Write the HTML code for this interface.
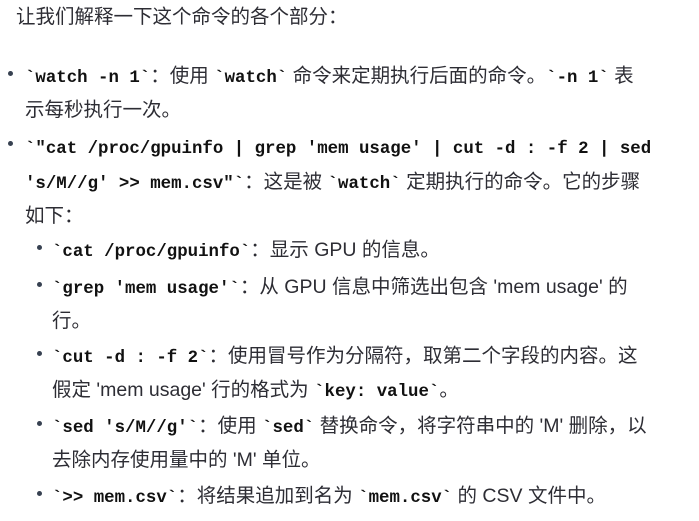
<!DOCTYPE html>
<html><head><meta charset="utf-8"><style>
body{margin:0;width:699px;height:521px;background:#fff;overflow:hidden;position:relative;font-family:"Liberation Sans","Noto Sans CJK SC",sans-serif;font-size:19.5px;color:#2d2d34}
.l{position:absolute;white-space:nowrap;line-height:24px}
code{font-family:"Liberation Mono",monospace;font-weight:bold;font-size:17.4px;color:#111}
.b{position:absolute;width:5px;height:5px;border-radius:50%;background:#374151}
</style></head><body>
<div class="l" style="left:16px;top:5px">让我们解释一下这个命令的各个部分：</div>

<div class="b" style="left:8px;top:71px"></div>
<div class="l" style="left:25px;top:64px"><code>`watch -n 1`</code>：使用 <code>`watch`</code> 命令来定期执行后面的命令。<code>`-n 1`</code> 表</div>
<div class="l" style="left:25px;top:98px">示每秒执行一次。</div>

<div class="b" style="left:8px;top:141px"></div>
<div class="l" style="left:25px;top:135px"><code>`"cat /proc/gpuinfo | grep 'mem usage' | cut -d : -f 2 | sed</code></div>
<div class="l" style="left:25px;top:170px"><code>'s/M//g' &gt;&gt; mem.csv"`</code>：这是被 <code>`watch`</code> 定期执行的命令。它的步骤</div>
<div class="l" style="left:25px;top:204px">如下：</div>

<div class="b" style="left:37px;top:245px"></div>
<div class="l" style="left:52px;top:238px"><code>`cat /proc/gpuinfo`</code>：显示 GPU 的信息。</div>
<div class="b" style="left:37px;top:282px"></div>
<div class="l" style="left:52px;top:275px"><code>`grep 'mem usage'`</code>：从 GPU 信息中筛选出包含 'mem usage' 的</div>
<div class="l" style="left:52px;top:309px">行。</div>
<div class="b" style="left:37px;top:351px"></div>
<div class="l" style="left:52px;top:344px"><code>`cut -d : -f 2`</code>：使用冒号作为分隔符，取第二个字段的内容。这</div>
<div class="l" style="left:52px;top:378px">假定 'mem usage' 行的格式为 <code>`key: value`</code>。</div>
<div class="b" style="left:37px;top:421px"></div>
<div class="l" style="left:52px;top:414px"><code>`sed 's/M//g'`</code>：使用 <code>`sed`</code> 替换命令，将字符串中的 'M' 删除，以</div>
<div class="l" style="left:52px;top:448px">去除内存使用量中的 'M' 单位。</div>
<div class="b" style="left:37px;top:491px"></div>
<div class="l" style="left:52px;top:484px"><code>`&gt;&gt; mem.csv`</code>：将结果追加到名为 <code>`mem.csv`</code> 的 CSV 文件中。</div>
</body></html>
